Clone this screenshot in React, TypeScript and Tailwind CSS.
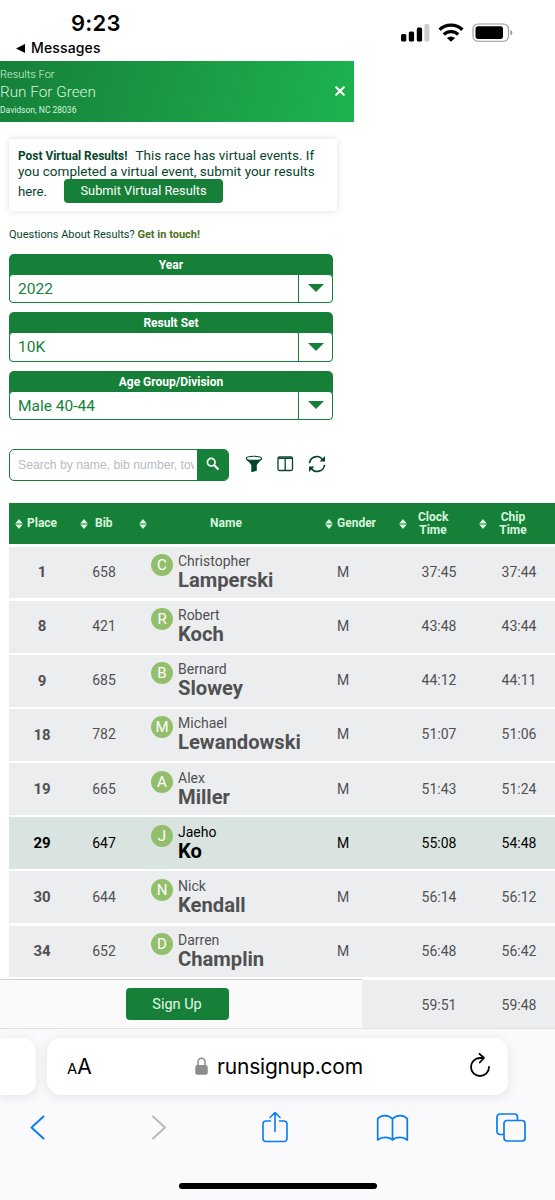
const results = [
  { place: "1", bib: "658", first: "Christopher", last: "Lamperski", clock: "37:45", chip: "37:44" },
  { place: "8", bib: "421", first: "Robert", last: "Koch", clock: "43:48", chip: "43:44" },
  { place: "9", bib: "685", first: "Bernard", last: "Slowey", clock: "44:12", chip: "44:11" },
  { place: "18", bib: "782", first: "Michael", last: "Lewandowski", clock: "51:07", chip: "51:06" },
  { place: "19", bib: "665", first: "Alex", last: "Miller", clock: "51:43", chip: "51:24" },
  { place: "29", bib: "647", first: "Jaeho", last: "Ko", clock: "55:08", chip: "54:48", active: true },
  { place: "30", bib: "644", first: "Nick", last: "Kendall", clock: "56:14", chip: "56:12" },
  { place: "34", bib: "652", first: "Darren", last: "Champlin", clock: "56:48", chip: "56:42" },
];

function StatusBar() {
  return (
    <div className="flex h-[61px] justify-between bg-white font-[Inter,sans-serif] text-black">
      <div className="pl-[16px] pt-[9px]">
        <div className="pl-[55px] text-[22px] font-semibold leading-[29px] tracking-[0.2px]">9:23</div>
        <div className="flex items-center gap-[6px] text-[14px] font-medium leading-[20px] tracking-[0.15px]">
          <svg width="9" height="9" viewBox="0 0 9 9">
            <path d="M0 4.5 9 0v9z" />
          </svg>
          Messages
        </div>
      </div>
      <div className="flex items-start pr-[41px] pt-[23px]">
        <svg width="30" height="20" viewBox="0 0 30 20">
          <rect x="1" y="11" width="5.3" height="7.5" rx="1.5" />
          <rect x="8.8" y="8.5" width="5.3" height="10" rx="1.5" />
          <rect x="16.8" y="4.5" width="5.3" height="14" rx="1.5" />
          <rect x="24.4" y="1" width="5" height="17.5" rx="1.5" fill="#ccc" />
        </svg>
        <svg className="ml-[8px]" width="26" height="20" viewBox="0 0 26 20" fill="none" stroke="#000" strokeWidth="3.3">
          <path d="M1.6 6.8a16.4 16.4 0 0 1 22.8 0" />
          <path d="M5.8 11.5a10.4 10.4 0 0 1 14.4 0" />
          <path d="M8.9 15.1a6 6 0 0 1 8.2 0L13 18.8z" fill="#000" stroke="none" />
        </svg>
        <svg className="ml-[8px]" width="42" height="20" viewBox="0 0 42 20">
          <rect x="1" y="1" width="35.5" height="17.3" rx="5" fill="none" stroke="#999" strokeWidth="1.1" />
          <rect x="3.5" y="3.3" width="27.5" height="12.6" rx="2.6" />
          <path d="M38.3 7v5.5c2.8-1 2.8-4.5 0-5.5z" fill="#999" />
        </svg>
      </div>
    </div>
  );
}

function SelectBox({ label, value }: { label: string; value: string }) {
  return (
    <div className="h-[49.5px] w-[324px] rounded-[5px] bg-[#168039]">
      <div className="h-[20px] text-center text-[12px] font-bold leading-[22px] text-white">{label}</div>
      <div className="flex h-[29.5px] rounded-[4px] border border-[#168039] bg-white">
        <div className="flex-1 pl-[8px] text-[15.5px] leading-[29px] text-[#168039]">{value}</div>
        <div className="flex w-[34px] items-center justify-center border-l border-[#168039]">
          <svg width="16" height="8" viewBox="0 0 16 8" fill="#168039">
            <path d="M0 0h16L8 8z" />
          </svg>
        </div>
      </div>
    </div>
  );
}

function SortIcon() {
  return (
    <svg className="shrink-0" width="8" height="10" viewBox="0 0 8 10" fill="#d8f5df">
      <path d="M4 0 7.8 4.4H.2zM4 10 .2 5.6h7.6z" />
    </svg>
  );
}

function Toolbar() {
  return (
    <div className="mt-[29px] flex h-[32px] items-center">
      <div className="flex h-[32px] w-[220px] overflow-hidden rounded-[5px] border border-[#168039]">
        <input
          className="w-[187px] pl-[8px] pr-[3px] font-['Liberation_Sans',sans-serif] text-[12.2px] placeholder:text-[#b4bcc2]"
          placeholder="Search by name, bib number, town"
        />
        <div className="flex flex-1 items-center justify-center bg-[#168039]">
          <svg className="-mt-[2px]" width="14" height="14" viewBox="0 0 14 14" fill="none" stroke="#fff" strokeWidth="1.7">
            <circle cx="5.2" cy="5.2" r="3.8" />
            <path d="m8 8 4.5 4.5" strokeWidth="2.2" />
          </svg>
        </div>
      </div>
      <svg className="-mt-[2px] ml-[16px]" width="18" height="18" viewBox="0 0 18 18" fill="#07452c">
        <path d="M.8 3.5C.8 5 6.300 8.500 6.300 10.500v6.700l5.500-1.400v-5.300c0-2 5.200-5.500 5.200-7z" />
        <ellipse cx="8.9" cy="3.4" rx="7.6" ry="2.2" fill="#fff" stroke="#07452c" strokeWidth="1.1" />
        <path d="M2.5 4.7h12.8L9 6.5z" />
      </svg>
      <svg className="-mt-[2px] ml-[14px]" width="17" height="16" viewBox="0 0 17 16" fill="none" stroke="#07452c" strokeWidth="1.3">
        <rect x="1" y="1" width="14.5" height="13.5" rx="1.5" />
        <path d="M1 2.4h14.5M8.200 2v12.500" />
      </svg>
      <svg className="-mt-[2px] ml-[14px]" width="18" height="18" viewBox="0 0 18 18" fill="none" stroke="#07452c" strokeWidth="1.6">
        <path d="M1.5 8.300A7.300 7.300 0 0 1 14.800 4.800M16.500 9.700A7.300 7.300 0 0 1 3.200 13.200" />
        <path d="M17 1v5.400h-5.400zM1 17v-5.400h5.400z" fill="#07452c" stroke="none" />
      </svg>
    </div>
  );
}

function ResultsTable() {
  return (
    <div className="mt-[22px] w-[546px]">
      <div className="mb-[2.8px] flex h-[41px] items-center bg-[#168039] text-[12px] font-bold leading-[13px] text-[#d8f5df]">
        <div className="flex w-[66px] items-center gap-[4px] pl-[6px]"><SortIcon />Place</div>
        <div className="flex w-[58px] items-center gap-[7px] pl-[5px]"><SortIcon />Bib</div>
        <div className="flex w-[185px] items-center pl-[6px]"><SortIcon /><div className="flex-1 pr-[13px] text-center">Name</div></div>
        <div className="flex w-[75px] items-center gap-[4px] pl-[7px]"><SortIcon />Gender</div>
        <div className="flex w-[80px] items-center gap-[11px] pl-[6px]"><SortIcon /><div className="w-[30px] text-center">Clock Time</div></div>
        <div className="flex w-[82px] items-center gap-[11px] pl-[6px]"><SortIcon /><div className="w-[30px] text-center">Chip Time</div></div>
      </div>
      {results.map((r) => (
        <div key={r.place} className={`mb-[2.5px] flex h-[51.62px] items-center text-[14px] ${r.active ? "bg-[#d9e4e0] text-black" : "bg-[#ecedef] text-[#505152]"}`}>
          <div className="w-[66px] text-center text-[15px] font-bold">{r.place}</div>
          <div className="w-[58px] text-center">{r.bib}</div>
          <div className="flex w-[185px] items-start gap-[5px] pb-[2px] pl-[18px]">
            <div className="mt-[2px] h-[22px] w-[22px] shrink-0 rounded-full bg-[#93bf6d] text-center text-[15px] leading-[23px] text-white">{r.first[0]}</div>
            <div>
              <div className="leading-[18px]">{r.first}</div>
              <div className="text-[20.2px] font-bold leading-[21px]">{r.last}</div>
            </div>
          </div>
          <div className="w-[75px] pl-[19px]">M</div>
          <div className="w-[80px] pl-[12px] text-center">{r.clock}</div>
          <div className="w-[82px] pl-[10px] text-center">{r.chip}</div>
        </div>
      ))}
      <div className="flex h-[51.6px] items-center bg-[#ecedef] pl-[384px] text-[14px] text-[#505152]">
        <div className="w-[80px] pl-[12px] text-center">59:51</div>
        <div className="w-[82px] pl-[10px] text-center">59:48</div>
      </div>
    </div>
  );
}

function BrowserBar() {
  return (
    <div className="h-[172px] overflow-hidden border-t border-[#dedfe1] bg-[#fafafc] font-[Inter,sans-serif]">
      <div className="mt-[9px] flex h-[57px] gap-[11px]">
        <div className="w-[36px] rounded-r-[14px] bg-white shadow-[0_2px_12px_#00000018]" />
        <div className="flex w-[461px] items-center rounded-[14px] bg-white pl-[20px] shadow-[0_2px_12px_#00000018]">
          <div className="flex w-[128px] items-baseline"><span className="text-[15px]">A</span><span className="text-[21px]">A</span></div>
          <svg className="-mt-[2px]" width="13" height="18" viewBox="0 0 13 18" fill="#8b8b90">
            <rect x=".3" y="8" width="12.4" height="9.8" rx="2" />
            <path d="M3 8.5V5a3.5 3.8 0 0 1 7 0v3.5" fill="none" stroke="#8b8b90" strokeWidth="1.5" />
          </svg>
          <div className="ml-[9px] flex-1 text-[21px] tracking-[-0.2px]">runsignup.com</div>
          <svg className="-mt-[3px] mr-[17px]" width="22" height="26" viewBox="0 0 22 26" fill="none" stroke="#000" strokeWidth="1.8" strokeLinecap="round" strokeLinejoin="round">
            <path d="M14 6H11a9 9 0 1 0 9 9M10.5 1.800 15 6l-4.300 4.500" />
          </svg>
        </div>
      </div>
      <div className="mt-[2px] flex h-[61px] items-center pl-[30px] text-[#087cf0]">
        <svg width="15" height="25" viewBox="0 0 15 25" fill="none" stroke="currentColor" strokeWidth="2" strokeLinecap="round" strokeLinejoin="round">
          <path d="m13.5 1.500-12 11 12 11" />
        </svg>
        <svg className="ml-[107px] text-[#b9babc]" width="14" height="25" viewBox="0 0 14 25" fill="none" stroke="currentColor" strokeWidth="2" strokeLinecap="round" strokeLinejoin="round">
          <path d="m1 1.500 12 11-12 11" />
        </svg>
        <svg className="-mt-[2px] ml-[96px]" width="26" height="32" viewBox="0 0 26 32" fill="none" stroke="currentColor" strokeWidth="1.6" strokeLinecap="round" strokeLinejoin="round">
          <path d="M8.500 10H4a3 3 0 0 0-3 3v14.500a3 3 0 0 0 3 3h18a3 3 0 0 0 3-3V13a3 3 0 0 0-3-3h-4.500M13 20.500V1.500M8 6.500l5-5 5 5" />
        </svg>
        <svg className="ml-[88px]" width="33" height="28" viewBox="0 0 33 28" fill="none" stroke="currentColor" strokeWidth="1.7" strokeLinejoin="round">
          <path d="M16.500 5C12.500.8 5.500.2 1.700 4.800V26c4-3.500 11.200-3.500 14.800 0 3.600-3.500 10.800-3.500 14.800 0V4.800C27.500.2 20.500.8 16.500 5zv21" />
        </svg>
        <svg className="ml-[87px]" width="30" height="29" viewBox="0 0 30 29" fill="none" stroke="currentColor" strokeWidth="1.7">
          <path d="M8 21.500H4a3 3 0 0 1-3-3V4a3 3 0 0 1 3-3h14.500a3 3 0 0 1 3 3v3.500" />
          <rect x="8" y="7.5" width="21" height="20.5" rx="3" />
        </svg>
      </div>
      <div className="mx-auto mt-[25px] h-[6px] w-[198px] rounded-full bg-black" />
    </div>
  );
}

function App() {
  return (
    <div className="h-[1200px] w-[555px] overflow-hidden bg-white font-[Roboto,sans-serif]">
      <StatusBar />
      <div className="relative h-[967px] overflow-hidden">
        <div className="flex h-[61px] w-[354px] items-center justify-between bg-[linear-gradient(105deg,#168039,#1eb34f)] pr-[9px] text-[#d8f5df]">
          <div className="pt-px">
            <div className="text-[11px] font-light leading-[15px]">Results For</div>
            <div className="text-[15.3px] font-light leading-[20px]">Run For Green</div>
            <div className="text-[8.5px] leading-[16px]">Davidson, NC 28036</div>
          </div>
          <svg className="-mt-[2px]" width="10" height="10" viewBox="0 0 10 10" stroke="#fff" strokeWidth="2" strokeLinecap="round">
            <path d="m1.2 1.2 7.6 7.6m0-7.6L1.2 8.8" />
          </svg>
        </div>
        <div className="pl-[9px]">
          <div className="mt-[17px] h-[72px] w-[328px] bg-white pl-[9px] pt-[9px] text-[13.5px] leading-[15px] text-[#07452c] shadow-[0_0_7px_#00000020]">
            <div className="whitespace-nowrap"><b className="mr-[8px] text-[11.9px]">Post Virtual Results!</b>This race has virtual events. If</div>
            <div className="whitespace-nowrap">you completed a virtual event, submit your results</div>
            <div className="flex items-center text-[13.2px]">here.
              <div className="ml-[17px] h-[24px] w-[159px] rounded-[4px] bg-[#168039] text-center text-[12.8px] leading-[24px] text-white">Submit Virtual Results</div>
            </div>
          </div>
          <div className="mt-[16px] text-[11px] leading-[15px] text-[#07452c]">Questions About Results? <b className="text-[#4c7022]">Get in touch!</b></div>
          <div className="mt-[11.5px] flex flex-col gap-[9px]">
            <SelectBox label="Year" value="2022" />
            <SelectBox label="Result Set" value="10K" />
            <SelectBox label="Age Group/Division" value="Male 40-44" />
          </div>
          <Toolbar />
          <ResultsTable />
        </div>
        <div className="absolute bottom-0 left-0 flex h-[49px] w-[362px] items-center justify-center border-t border-[#cbd3d5] bg-[#fafafb] pr-[8px]">
          <div className="h-[32px] w-[103px] rounded-[4px] bg-[#168039] text-center text-[14.5px] leading-[33px] text-[#e5f8e9]">Sign Up</div>
        </div>
      </div>
      <BrowserBar />
    </div>
  );
}

export default App;
